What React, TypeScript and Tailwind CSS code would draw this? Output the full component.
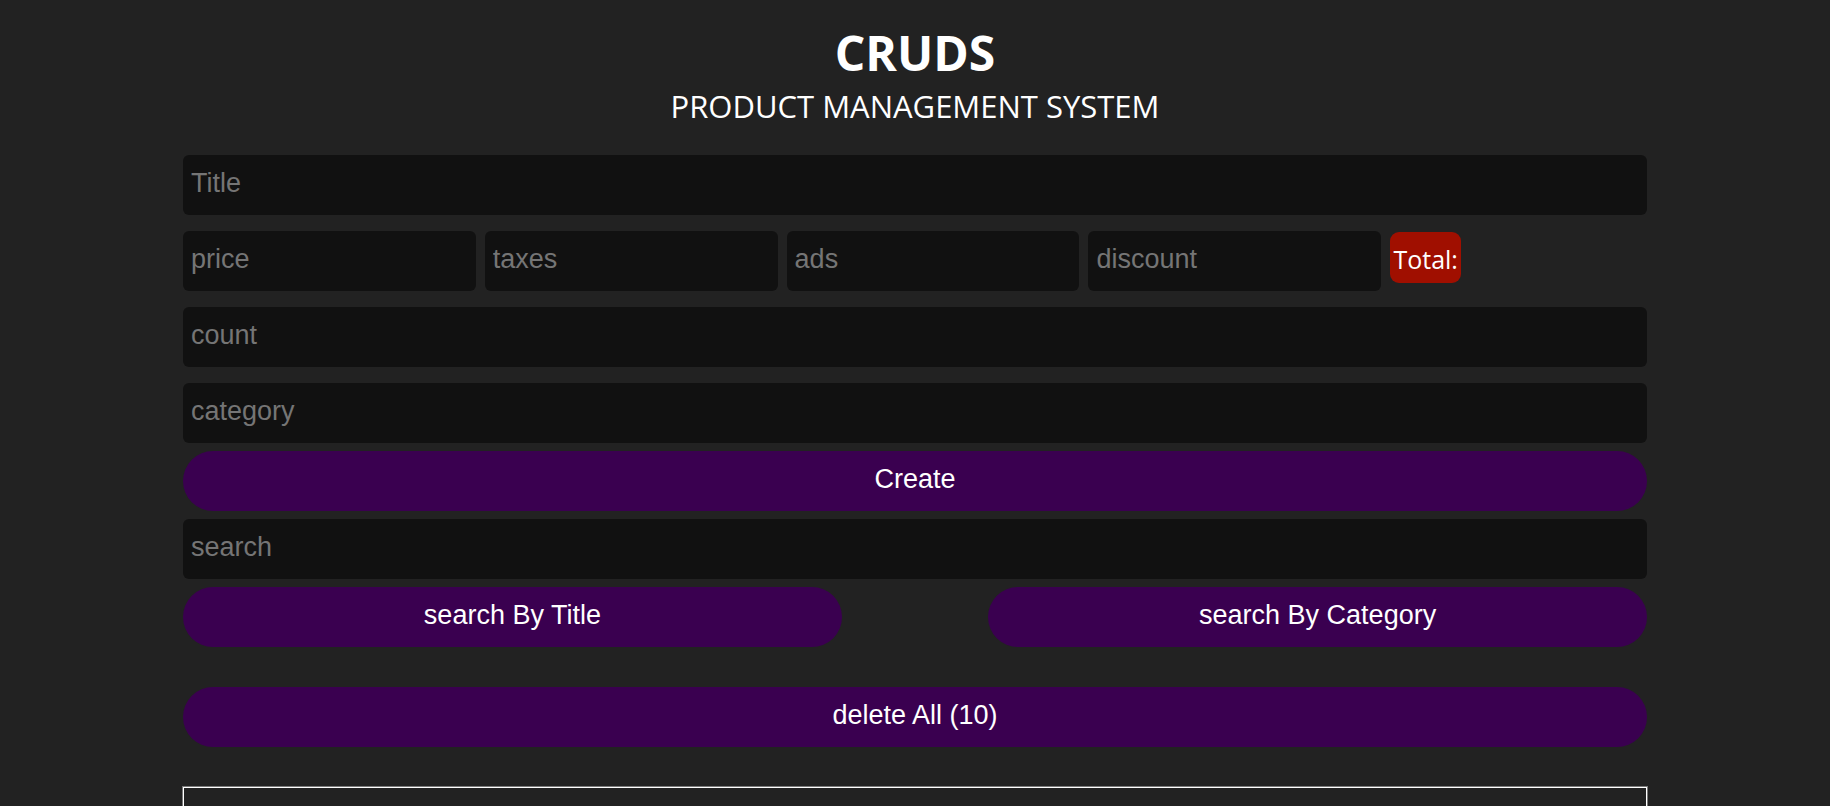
export default function App() {
  const sans = "font-['Liberation_Sans',Arial,sans-serif]";
  const input =
    "h-[60px] rounded-[6px] bg-[#111111] pl-[8px] pb-[3px] text-[27px] text-white placeholder:text-[#757575] outline-none border-none " +
    sans;
  const button =
    "h-[60px] rounded-full bg-[#3a0050] pb-[3px] text-[27px] text-white " + sans;

  return (
    <div className="h-screen overflow-hidden bg-[#222222] font-['Open_Sans',sans-serif] text-white">
      <main className="mx-auto w-[80%] pt-[29px]">

        <div className="text-center">
          <h1 className="text-[48px] font-bold leading-none">CRUDS</h1>
          <p className="mt-[14px] text-[31px] leading-none">PRODUCT MANAGEMENT SYSTEM</p>
        </div>

        <div className="mt-[33px] flex flex-col">
          <input className={input + " w-full"} placeholder="Title" />

          <div className="mt-[16px] flex flex-row items-start gap-[9px]">
            <input className={input + " w-[20%]"} placeholder="price" />
            <input className={input + " w-[20%]"} placeholder="taxes" />
            <input className={input + " w-[20%]"} placeholder="ads" />
            <input className={input + " w-[20%]"} placeholder="discount" />
            <small className="mt-[1px] flex h-[51px] w-[71px] items-center justify-center rounded-[9px] bg-[#a00f00] pt-[5px] text-[25px]">
              Total:
            </small>
          </div>

          <input className={input + " mt-[16px] w-full"} placeholder="count" />
          <input className={input + " mt-[16px] w-full"} placeholder="category" />

          <button className={button + " mt-[8px] w-full"}>Create</button>

          <input className={input + " mt-[8px] w-full"} placeholder="search" />

          <div className="mt-[8px] flex flex-row justify-between">
            <button className={button + " w-[45%]"}>search By Title</button>
            <button className={button + " w-[45%]"}>search By Category</button>
          </div>

          <button className={button + " mt-[40px] w-full"}>delete All (10)</button>
        </div>

        <div className="mt-[40px] h-[200px] w-full border border-white shadow-[0_0_0_1px_#7a7a7a]"></div>

      </main>
    </div>
  );
}
